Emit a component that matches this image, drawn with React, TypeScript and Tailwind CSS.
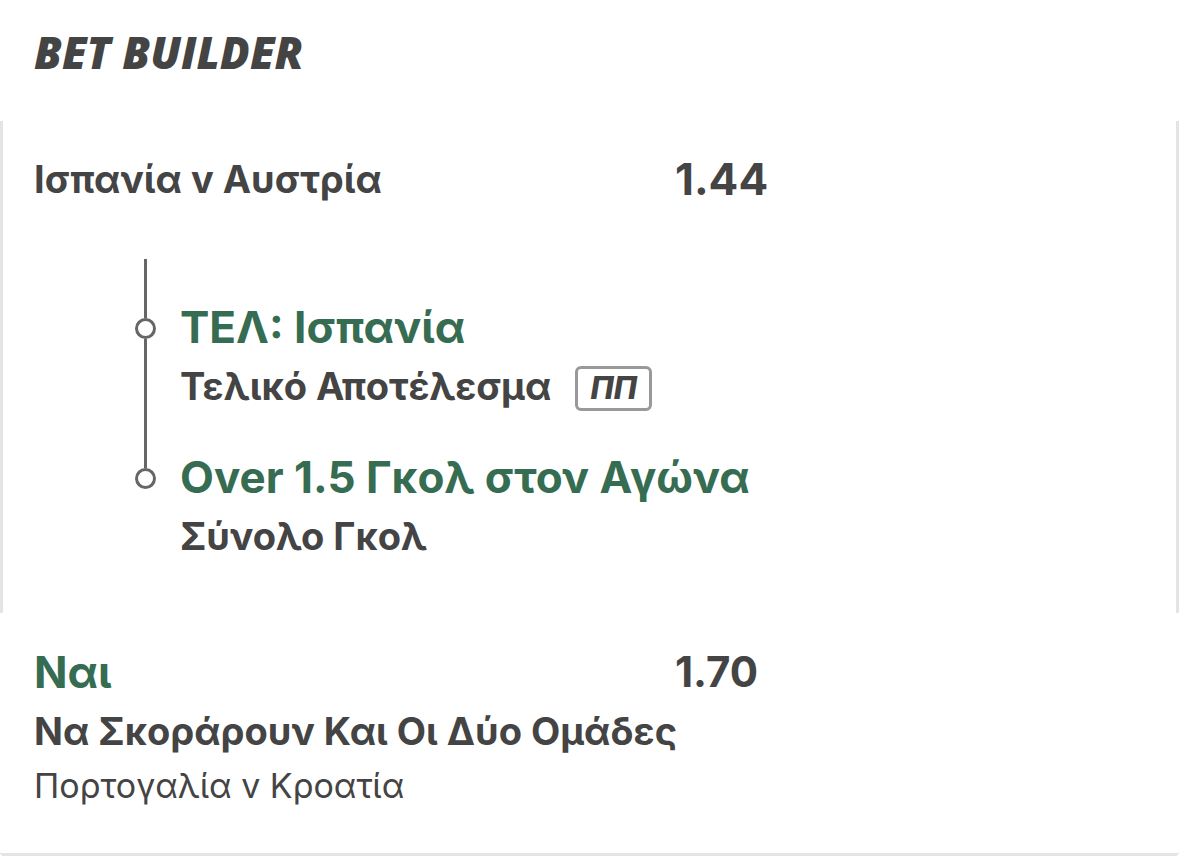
import clsx from 'clsx';

const legs = [
  { pick: 'ΤΕΛ: Ισπανία', market: 'Τελικό Αποτέλεσμα', badge: 'ΠΠ' },
  { pick: 'Over 1.5 Γκολ στον Αγώνα', market: 'Σύνολο Γκολ' },
];

function Leg({ leg, first, last }: { leg: (typeof legs)[number]; first: boolean; last: boolean }) {
  return (
    <li className="flex gap-6">
      {/* Rail */}
      <div className="flex w-[21px] shrink-0 flex-col items-center">
        <div className={clsx('w-[3px] bg-[#666666]', first ? 'h-[59px]' : 'h-[21px]')} />
        <div className="size-[21px] rounded-full border-3 border-[#666666]" />
        {!last && <div className="w-[3px] flex-1 bg-[#666666]" />}
      </div>
      <div className={clsx(first && 'pt-[38px]', !last && 'pb-8')}>
        <p className="text-[44px] leading-[60px] font-bold text-[#356c52]">{leg.pick}</p>
        <div className="flex items-center gap-6">
          <p className="text-[38px] leading-[58px] font-bold">{leg.market}</p>
          {leg.badge && (
            <span className="mt-1 flex h-[45px] w-[77px] items-center justify-center rounded-md border-3 border-[#999999] text-[31px] leading-8 font-extrabold italic">
              {leg.badge}
            </span>
          )}
        </div>
      </div>
    </li>
  );
}

export default function App() {
  return (
    <main className="overflow-hidden rounded-b-sm border-b-3 border-[#e4e4e4] bg-white font-['Inter','Noto_Sans',sans-serif] text-[#444444]">
      <header className="px-[34px] pt-8 pb-[49px]">
        <h1 className="font-['Open_Sans',sans-serif] text-[44px] leading-10 font-extrabold italic">BET BUILDER</h1>
      </header>

      {/* Bet builder selection */}
      <section className="border-x-3 border-[#e4e4e4] px-[31px] pt-[34px] pb-12">
        <div className="grid grid-cols-[15fr_11fr] items-center leading-[48px] font-bold">
          <h2 className="text-[38px]">Ισπανία v Αυστρία</h2>
          <p className="text-[44px]">1.44</p>
        </div>
        <ul className="mt-14 ml-[101px]">
          {legs.map((leg, i) => (
            <Leg key={leg.pick} leg={leg} first={i === 0} last={i === legs.length - 1} />
          ))}
        </ul>
      </section>

      {/* Single selection */}
      <section className="px-[34px] pt-[29px] pb-[41px]">
        <div className="grid grid-cols-[15fr_11fr] items-center leading-[60px] font-bold">
          <h2 className="text-[44px] text-[#356c52]">Ναι</h2>
          <p className="text-[42px]">1.70</p>
        </div>
        <p className="text-[38px] leading-[58px] font-bold">Να Σκοράρουν Και Οι Δύο Ομάδες</p>
        <p className="text-[34px] leading-[52px]">Πορτογαλία v Κροατία</p>
      </section>
    </main>
  );
}
